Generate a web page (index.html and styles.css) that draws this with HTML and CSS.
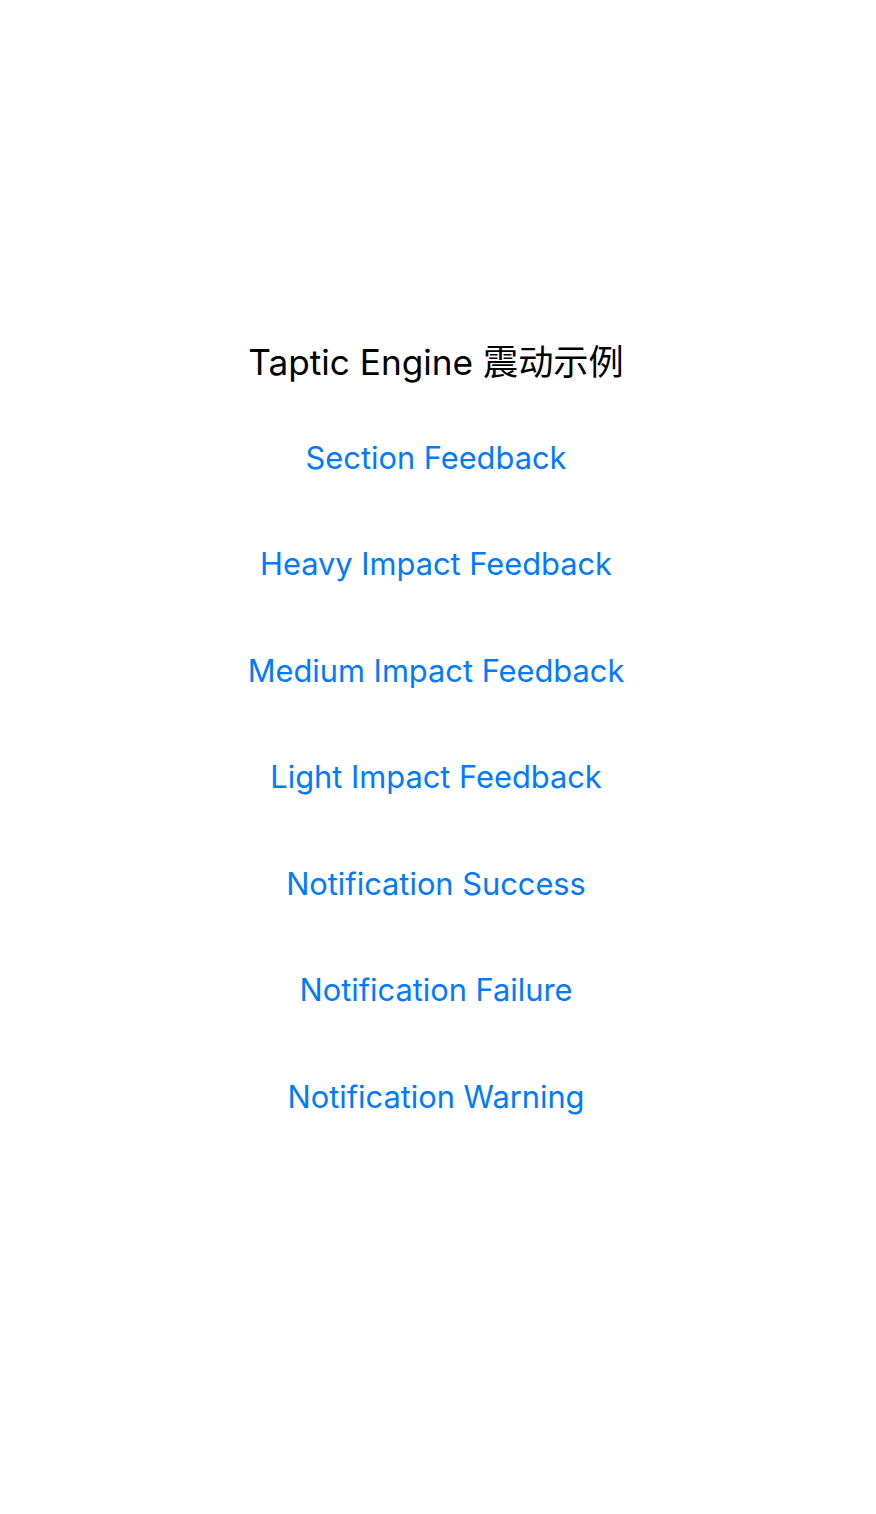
FILE: index.html
```html
<!DOCTYPE html>
<html lang="zh-CN">
<head>
<meta charset="utf-8">
<title>Taptic Engine 震动示例</title>
<link rel="stylesheet" href="styles.css">
</head>
<body>
<main class="screen">
  <h1 class="title">Taptic Engine 震动示例</h1>
  <div class="buttons">
    <button class="btn">Section Feedback</button>
    <button class="btn">Heavy Impact Feedback</button>
    <button class="btn">Medium Impact Feedback</button>
    <button class="btn">Light Impact Feedback</button>
    <button class="btn">Notification Success</button>
    <button class="btn">Notification Failure</button>
    <button class="btn">Notification Warning</button>
  </div>
</main>
</body>
</html>
```

FILE: styles.css
```css
html, body {
  margin: 0;
  padding: 0;
  background: #ffffff;
}
.screen {
  width: 876px;
  height: 1514px;
  box-sizing: border-box;
  padding-right: 4px;
  display: flex;
  flex-direction: column;
  align-items: center;
  font-family: Inter, "Noto Sans CJK SC", sans-serif;
}
.title {
  margin: 342px 0 0 0;
  height: 40px;
  line-height: 40px;
  font-size: 35.2px;
  font-weight: 400;
  color: #000000;
  text-align: center;
  white-space: nowrap;
}
.buttons {
  margin-top: 22.75px;
  display: flex;
  flex-direction: column;
  align-items: center;
}
.btn {
  appearance: none;
  border: 0;
  background: transparent;
  padding: 0;
  height: 106.5px;
  line-height: 106.5px;
  font-family: Inter, "Noto Sans CJK SC", sans-serif;
  font-size: 30.8px;
  font-weight: 400;
  color: #007aff;
  white-space: nowrap;
  cursor: pointer;
}
```
